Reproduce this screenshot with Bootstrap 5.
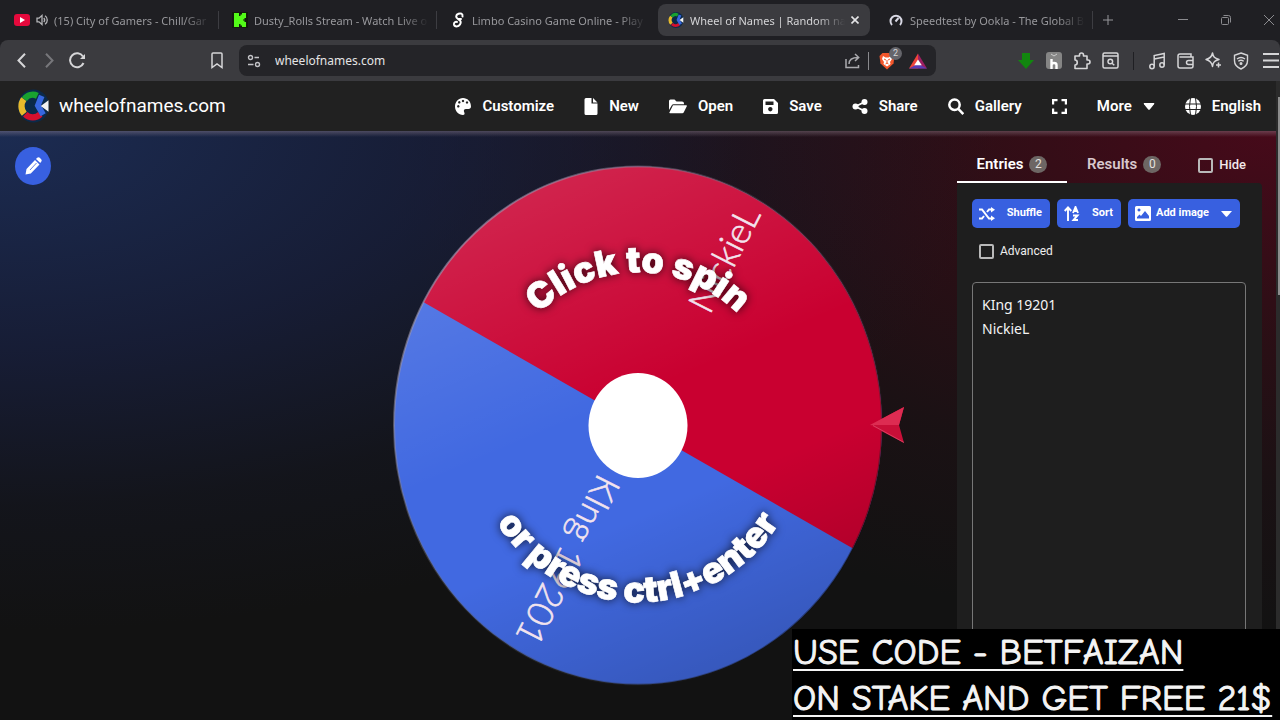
<!DOCTYPE html>
<html lang="en" data-bs-theme="dark">
<head>
<meta charset="utf-8">
<meta name="viewport" content="width=device-width, initial-scale=1">
<title>Wheel of Names | Random name picker</title>
<link rel="stylesheet" href="https://cdn.jsdelivr.net/npm/bootstrap@5.3.0/dist/css/bootstrap.min.css">
<style>
  body { font-family: Roboto, sans-serif; background: #121212; color: #fff; }
  svg { display: block; flex: none; }
  a { color: inherit; text-decoration: none; }
  button.plain { background: none; border: 0; padding: 0; color: inherit; display: flex; align-items: center; justify-content: center; }

  /* tab strip */
  .tabstrip { height: 40px; background: #1f1f23; font: 11px "Noto Sans", sans-serif; color: #98989c; }
  .tab-item { flex: 0 1 218px; min-width: 0; padding: 4px; position: relative; }
  .tab-pill { height: 32px; padding: 0 3px 0 10px; gap: 6px; border-radius: 8px; }
  .tab-item.has-rule::after { content: ""; width: 1px; height: 18px; background: #3d3d42; position: absolute; right: -1px; top: 11px; }
  .tab-item.active { flex-basis: 220px; }
  .tab-item.active .tab-pill { background: #3b3b3f; color: #d4d4d6; padding-right: 11px; }
  .tab-label { flex: 1 1 0; min-width: 0; overflow: hidden; white-space: nowrap;
    -webkit-mask-image: linear-gradient(90deg, #000 calc(100% - 28px), transparent); mask-image: linear-gradient(90deg, #000 calc(100% - 28px), transparent); }
  .new-tab { width: 32px; color: #77777b; }
  .win-btns { gap: 33px; padding-right: 6px; color: #8b8b8f; }

  /* browser toolbar */
  .toolbar-wrap { background: #1f1f23; }
  .toolbar { height: 41px; padding: 0 1px 0 7px; background: #3b3b3f; border-radius: 8px 8px 0 0; color: #d6d6d8; }
  .toolbar .tool { width: 28px; height: 32px; flex: none; }
  .toolbar .tool-end { width: 24px; justify-content: end; }
  .bookmark { margin-left: 112px; margin-right: 8px; }
  .address { height: 31px; background: #242428; border-radius: 8px; margin-right: 76px; padding: 0 9px 0 8px; }
  .address input { background: none; border: 0; outline: 0; color: #e4e4e6; font: 12px "Noto Sans", sans-serif; padding: 0 0 0 14px; }
  .address .rule { margin: 0 10px 0 8px; }
  .address .rewards { margin-left: 14px; }
  .rule { width: 1px; height: 18px; background: #8a8a8e; }
  .rule-dark { margin: 0 9px; background: #1f1f23; }
  .shield-count { position: absolute; top: -5px; right: -7px; width: 13px; height: 13px; border-radius: 50%; background: #65656b; font-size: 9px; line-height: 13px; text-align: center; }

  /* site header */
  .site { background: #212121; min-height: 0; }
  .site-head { height: 50px; padding: 0 15px 0 18px; }
  .brand { font-size: 19px; gap: 10px; }
  .site-menu { gap: 30px; font-size: 15px; font-weight: 600; }
  .site-menu a { display: flex; align-items: center; gap: 11px; }

  /* wheel page */
  .stage { display: grid; grid-template-columns: 1fr 540px 1fr; overflow: hidden;
    background:
      linear-gradient(rgba(170,150,165,.36), rgba(170,150,165,0) 6px),
      radial-gradient(ellipse 1000px 500px at 0 0, rgba(30,50,98,.8), rgba(27,38,84,.52) 45%, rgba(24,30,60,.22) 75%, transparent),
      radial-gradient(ellipse 900px 500px at 100% 0, rgba(84,8,28,.8), rgba(78,10,26,.42) 40%, rgba(60,14,28,.2) 70%, transparent),
      #121212; }
  .edit-btn { width: 36px; height: 38px; margin: 16px 0 0 15px; border-radius: 50%; background: #3860e0; border: 0; color: #fff; padding: 0; display: flex; align-items: center; justify-content: center; }
  .side { width: 305px; margin-right: 14px; justify-self: end; }
  .side-tabs { height: 36px; font-size: 15px; font-weight: 600; }
  .side-tabs .nav-link { padding: 0; height: 36px; background: none; border: 0; border-bottom: 2px solid transparent; border-radius: 0; color: #d9c8cd; display: flex; align-items: center; justify-content: center; gap: 6px; }
  .side-tabs .nav-link.active { width: 110px; color: #fff; border-bottom-color: #fff; }
  .side-tabs .nav-link.results { margin-left: 20px; }
  .count-pill { width: 18px; height: 17px; border-radius: 9px; background: #6d6664; color: #e4e0df; font-size: 12px; line-height: 17px; text-align: center; font-weight: 400; }
  .hide-opt { font-size: 13px; font-weight: 500; gap: 6px; color: #f2e8ea; }
  .box { appearance: none; width: 15px; height: 15px; border: 2px solid #b9b9b9; border-radius: 2px; margin: 0; flex: none; }
  .panel { background: #1e1e1e; border-radius: 4px; padding: 16px 16px 0 15px; }
  .btn-row { gap: 7px; }
  .btn-wheel { height: 29px; padding: 0 8px 0 7px; font-size: 11px; font-weight: 700; background: #3860e0; color: #fff; border: 0; border-radius: 5px; display: flex; align-items: center; justify-content: space-between; }
  .btn-shuffle { width: 78px; }
  .btn-sort { width: 64px; }
  .btn-image { width: 112px; justify-content: start; gap: 5px; }
  .advanced { font-size: 12px; gap: 6px; padding: 15px 0 23px 7px; color: #eee; line-height: 16px; }
  .names { display: block; width: 100%; flex: 1; background: transparent; border: 1px solid #777; border-radius: 4px; color: #f4f4f4; font: 14px/24px "Noto Sans", sans-serif; padding: 10px 9px; resize: none; outline: 0; }
  .scroll { width: 4px; background: #2b2b2b; padding-left: 2px; }
  .scroll-thumb { height: 198px; background: #8d8d8d; }
  .name-text { font: 300 36px Lato, sans-serif; fill: #f3e4ee; stroke: #f3e4ee; stroke-width: .6px; dominant-baseline: central; }
  .hint-text { font: 900 36px Inter, "Liberation Sans", sans-serif; fill: #fff; stroke: #fff; stroke-width: .6px; filter: drop-shadow(0 0 5px rgba(0,0,0,.75)); }

  /* stream banner */
  .banner { position: absolute; right: 0; bottom: 0; width: 488px; height: 91px; padding: 1px 0 0 1px; background: #000; color: #f4f4f4; font: 36px/46px "Comic Sans MS", "Comic Neue", "Noto Sans", sans-serif; -webkit-text-stroke: 1px #f4f4f4; text-decoration: underline; text-decoration-thickness: 2px; text-underline-offset: 5px; white-space: nowrap; }
</style>
</head>
<body class="vh-100 overflow-hidden d-flex flex-column position-relative">

<svg width="0" height="0" class="position-absolute" aria-hidden="true">
  <symbol id="wheel-logo" viewBox="0 0 32 34">
    <ellipse cx="16" cy="17" rx="16" ry="17" fill="#0b2a4a"/>
    <g fill="none" stroke-width="6.500">
      <path d="M6.500 10A11 11.500 0 0 1 20 6.500" stroke="#18a22f"/>
      <path d="M6.500 25A12 12 0 0 1 6 10" stroke="#e8b92b"/>
      <path d="M23 25.500A11 11 0 0 1 7.500 25.500" stroke="#d5102e"/>
      <path d="M24.500 6.500L20.500 16.500 26 26" stroke="#3767e0" stroke-width="6"/>
    </g>
    <path d="M31.500 11v12l-8-6z" fill="#f2f2f2"/>
  </symbol>
</svg>

<nav class="tabstrip d-flex flex-shrink-0" aria-label="Browser tabs">
  <div class="tab-item has-rule"><div class="tab-pill d-flex align-items-center">
    <svg width="16" height="14" viewBox="0 0 16 14"><rect y="1" width="16" height="12" rx="3" fill="#e5093c"/><path d="M6 4l5 3-5 3z" fill="#fff"/></svg>
    <svg width="12" height="12" viewBox="0 0 12 12" fill="none" stroke="#b5b5b8" stroke-width="1.300"><path d="M1 4.200h2L6 1.500v9L3 7.800H1z"/><path d="M7.800 4a3 3 0 0 1 0 4M9 1.800a5 5 0 0 1 0 8.400"/></svg>
    <a href="#" class="tab-label">(15) City of Gamers - Chill/Gar</a></div></div>
  <div class="tab-item has-rule"><div class="tab-pill d-flex align-items-center">
    <svg width="16" height="16" viewBox="0 0 16 16"><rect width="16" height="16" fill="#111d0c"/><path d="M2 1h5v3h1.500V2.500H10V1h4v5h-1.500v1.500H11v1h1.500V10H14v5h-4v-1.500H8.500V12H7v3H2z" fill="#53fc18"/></svg>
    <a href="#" class="tab-label">Dusty_Rolls Stream - Watch Live o</a></div></div>
  <div class="tab-item"><div class="tab-pill d-flex align-items-center">
    <svg width="16" height="16" viewBox="0 0 16 16" fill="none" stroke="#fff" stroke-width="2" stroke-linecap="round"><path d="M12.500 4.500C13 1.500 10.500 1 8.500 1.700 5.500 2.800 5.500 5.500 8 7c3 1.500 3.300 3.500 2 5.500C8.500 15 4.500 15 4 12.500c-.300-2 1.500-3 3-2.500M8 7h3"/></svg>
    <a href="#" class="tab-label">Limbo Casino Game Online - Play</a></div></div>
  <div class="tab-item active"><div class="tab-pill d-flex align-items-center">
    <svg width="16" height="16"><use href="#wheel-logo"/></svg>
    <a href="#" class="tab-label">Wheel of Names | Random na</a>
    <button class="plain" aria-label="Close tab"><svg width="8" height="8" viewBox="0 0 8 8" stroke="#e4e4e6" stroke-width="1.600"><path d="M.5.500l7 7M7.500.500l-7 7"/></svg></button></div></div>
  <div class="tab-item has-rule"><div class="tab-pill d-flex align-items-center">
    <svg width="16" height="16" viewBox="0 0 16 16" fill="none" stroke="#d8d8e4" stroke-width="2"><path d="M4 13a5.500 5.500 0 1 1 8 0M7.500 9.500L10.500 6"/></svg>
    <a href="#" class="tab-label">Speedtest by Ookla - The Global B</a></div></div>
  <button class="plain new-tab" aria-label="New tab"><svg width="12" height="12" viewBox="0 0 12 12" stroke="currentColor"><path d="M6 1v10M1 6h10"/></svg></button>
  <div class="win-btns ms-auto d-flex">
    <button class="plain" aria-label="Minimize"><svg width="10" height="10" viewBox="0 0 10 10" stroke="currentColor"><path d="M0 4.500h10"/></svg></button>
    <button class="plain" aria-label="Restore"><svg width="10" height="10" viewBox="0 0 10 10" stroke="currentColor" fill="none"><rect x=".5" y="2.500" width="7" height="7" rx="1"/><path d="M2.500.500h5q2 0 2 2v5"/></svg></button>
    <button class="plain" aria-label="Close window"><svg width="10" height="10" viewBox="0 0 10 10" stroke="currentColor"><path d="M0 0l10 10M10 0L0 10"/></svg></button>
  </div>
</nav>

<div class="toolbar-wrap flex-shrink-0">
<div class="toolbar d-flex align-items-center">
  <button class="plain tool" aria-label="Back"><svg width="9" height="15" viewBox="0 0 9 15" fill="none" stroke="currentColor" stroke-width="2"><path d="M8 .700L1.500 7.500 8 14.300"/></svg></button>
  <button class="plain tool" aria-label="Forward"><svg width="9" height="15" viewBox="0 0 9 15" fill="none" stroke="#77777b" stroke-width="2"><path d="M1 .700l6.500 6.800L1 14.300"/></svg></button>
  <button class="plain tool" aria-label="Reload"><svg width="17" height="17" viewBox="0 0 17 17" fill="none" stroke="currentColor" stroke-width="2"><path d="M14.500 11A7 7 0 1 1 14 4.500"/><path d="M16 2v5h-5z" fill="currentColor" stroke="none"/></svg></button>
  <button class="plain tool bookmark" aria-label="Bookmark"><svg width="12" height="17" viewBox="0 0 12 17" fill="none" stroke="currentColor" stroke-width="1.500"><path d="M1 2q0-1 1-1h8q1 0 1 1v13.500L6 12l-5 3.500z"/></svg></button>
  <div class="address d-flex align-items-center flex-grow-1">
    <svg width="14" height="14" viewBox="0 0 14 14" fill="none" stroke="#c4c4c8" stroke-width="1.400"><circle cx="3.500" cy="3.500" r="2"/><path d="M7.500 3.500H12M1 10.500h5.500"/><circle cx="10.500" cy="10.500" r="2"/></svg>
    <input type="text" class="flex-grow-1" aria-label="Address" value="wheelofnames.com">
    <svg width="15" height="16" viewBox="0 0 15 16" fill="none" stroke="#aaaaae" stroke-width="1.500"><path d="M1 6v8.500h12.500V12M4 11c0-4 3-6.500 9-6.500M10 1l3.700 3.500L10 8"/></svg>
    <span class="rule"></span>
    <button class="plain position-relative" aria-label="Shields"><svg width="16" height="18" viewBox="0 0 16 18"><path d="M3.500 1h9L15.500 4l-1 7.500L8 17.500 1.500 11.500.500 4z" fill="#f1562b"/><path d="M4 4l2.500 1.500h3L12 4l1 3-2 3 .5 2L8 14.500 4.500 12l.5-2-2-3z" fill="#fff"/><path d="M5 7l2 1M11 7L9 8M8 8v3M6.500 12L8 11l1.500 1" stroke="#f1562b" fill="none"/></svg><span class="shield-count">2</span></button>
    <button class="plain rewards" aria-label="Rewards"><svg width="18" height="16" viewBox="0 0 19 16"><path d="M9.500 0L0 16h9.500z" fill="#f0443a"/><path d="M9.500 0L19 16H9.500z" fill="#9e1f63"/><path d="M0 16l9.500-5 9.500 5z" fill="#5b3cb5"/><path d="M9.500 6.500l4 6h-8z" fill="#fff"/></svg></button>
  </div>
  <button class="plain tool" aria-label="Downloader"><svg width="16" height="16" viewBox="0 0 16 16"><path d="M4 0h8v7h4l-8 9-8-9h4z" fill="#12860f"/></svg></button>
  <button class="plain tool" aria-label="Extension"><svg width="16" height="17" viewBox="0 0 16 17"><rect width="16" height="17" rx="3" fill="#858585"/><path d="M5.500 7v10M5.500 13q0-2 2.500-2t2.500 2v4" stroke="#fff" stroke-width="2.400" fill="none"/><path d="M5 2l3 2 3-2" stroke="#ccc" fill="none"/></svg></button>
  <button class="plain tool" aria-label="Extensions"><svg width="18" height="18" viewBox="0 0 18 18" fill="none" stroke="currentColor" stroke-width="1.600" stroke-linejoin="round"><path d="M2 4h4.500V3a2 2 0 0 1 4 0v1H14v4h1a2 2 0 0 1 0 4h-1v4.500H2V13c3 0 3-5 0-5z"/></svg></button>
  <button class="plain tool" aria-label="Search tabs"><svg width="17" height="17" viewBox="0 0 17 17" fill="none" stroke="currentColor" stroke-width="1.500"><rect x="1" y="1" width="15" height="15" rx="1.500"/><path d="M1 4h15"/><circle cx="8.300" cy="9.500" r="2.300"/><path d="M10 11.200l2.300 2"/></svg></button>
  <span class="rule rule-dark"></span>
  <button class="plain tool" aria-label="Playlist"><svg width="17" height="18" viewBox="0 0 17 18" fill="none" stroke="currentColor" stroke-width="1.500"><circle cx="3" cy="14.500" r="2.200"/><circle cx="13" cy="13" r="2.200"/><path d="M5.200 14.500V3.500l10-2V13M5.200 7l10-2"/></svg></button>
  <button class="plain tool" aria-label="Wallet"><svg width="17" height="16" viewBox="0 0 17 16" fill="none" stroke="currentColor" stroke-width="1.500"><path d="M14 4V1H3Q1 1 1 3v10q0 2 2 2h11q2 0 2-2V4H2.500M16 7.500h-4.500a2 2 0 0 0 0 4H16"/></svg></button>
  <button class="plain tool" aria-label="Leo AI"><svg width="17" height="17" viewBox="0 0 17 17" fill="none" stroke="currentColor" stroke-width="1.500" stroke-linejoin="round"><path d="M7.500 1c.700 4 2 5.300 6.500 6.500-2 .500-3.500 1-4.700 2.300C8 11 7.800 12.500 7.500 14.500 6.800 10 5 8.500 1 7.500 5 6.500 6.800 5 7.500 1zM13.500 10.500v5M11 13h5"/></svg></button>
  <button class="plain tool" aria-label="VPN"><svg width="16" height="18" viewBox="0 0 16 18" fill="none" stroke="currentColor" stroke-width="1.400"><path d="M8 1l6.500 2.300v5.500c0 4-3 6.700-6.500 8.200C4.500 15.500 1.500 12.800 1.500 8.800V3.300z"/><path d="M4 7q4-3 8 0M5.300 9.300q2.700-2 5.400 0"/><circle cx="8" cy="11.500" r=".8"/></svg></button>
  <button class="plain tool tool-end" aria-label="Menu"><svg width="16" height="15" viewBox="0 0 16 15" stroke="currentColor" stroke-width="2"><path d="M0 1h16M0 7.500h16M0 14h16"/></svg></button>
</div>
</div>

<div class="site d-flex flex-grow-1">
<div class="d-flex flex-column flex-grow-1">
<header class="site-head d-flex align-items-center flex-shrink-0">
  <a href="#" class="brand d-flex align-items-center"><svg width="31" height="34"><use href="#wheel-logo"/></svg>wheelofnames.com</a>
  <nav class="site-menu d-flex align-items-center ms-auto">
    <a href="#"><svg width="16" height="17" viewBox="0 0 16 17" fill="currentColor"><path fill-rule="evenodd" d="M8 0C3.500 0 0 3.800 0 8.500 0 13 3.500 17 8 17c1.500 0 2-1.500 1.300-2.600C8.300 12.500 9 11 11 11h2.500C15 11 16 10 16 8.500 16 3.500 12.500 0 8 0zM3.300 9.500a1.200 1.200 0 1 1 .01 0zm1-4a1.200 1.200 0 1 1 .01 0zM8 4.200a1.200 1.200 0 1 1 .01 0zm4 1.500a1.200 1.200 0 1 1 .01 0z"/></svg>Customize</a>
    <a href="#"><svg width="14" height="17" viewBox="0 0 13 17" fill="currentColor"><path d="M1.500 0H7v5.500h6v10q0 1.500-1.500 1.500h-10Q0 17 0 15.500v-14Q0 0 1.500 0zM8.500 0L13 4.500H8.500z"/></svg>New</a>
    <a href="#"><svg width="18" height="15" viewBox="0 0 18 15" fill="currentColor"><path d="M0 11V2Q0 .500 1.500.500h4L7.500 2.500h5.500Q15 2.500 15 4.500V5.300H4.500Q3.300 5.300 2.800 6.300zM4.200 6.300H17.300q1 0 .5 1l-3 6q-.4 1-1.500 1H1Q0 14.300.500 13.300l3-6q.2-1 .7-1z"/></svg>Open</a>
    <a href="#"><svg width="15" height="15" viewBox="0 0 15 15" fill="currentColor"><path fill-rule="evenodd" d="M1.500 0H11l4 4v9.500q0 1.500-1.500 1.500h-12Q0 15 0 13.500v-12Q0 0 1.500 0zM2.500 2.500v3.500h8V2.500zM7.300 8a2.200 2.200 0 1 0 .01 0z"/></svg>Save</a>
    <a href="#"><svg width="16" height="15" viewBox="0 0 15 15" fill="currentColor"><circle cx="3" cy="7.500" r="3"/><circle cx="12" cy="3" r="3"/><circle cx="12" cy="12" r="3"/><path d="M12 3L3 7.500l9 4.500" fill="none" stroke="currentColor" stroke-width="1.800"/></svg>Share</a>
    <a href="#"><svg width="16" height="17" viewBox="0 0 16 17" fill="none" stroke="currentColor" stroke-width="2.500"><circle cx="6.500" cy="6.800" r="5.200"/><path d="M10.300 10.800l5 5.300"/></svg>Gallery</a>
    <a href="#" aria-label="Fullscreen"><svg width="15" height="15" viewBox="0 0 15 15" fill="none" stroke="currentColor" stroke-width="2.200"><path d="M1.100 5.500V1.100h4.400M9.500 1.100h4.400v4.400M13.900 9.500v4.400H9.500M5.500 13.900H1.100V9.500"/></svg></a>
    <a href="#">More<svg width="12" height="7" viewBox="0 0 11 7" fill="currentColor"><path d="M.5 0h10q.6.500 0 1.300L6.300 6.500q-.8.700-1.600 0L.5 1.300Q0 .500.500 0z"/></svg></a>
    <a href="#"><svg width="16" height="17" viewBox="0 0 16 17"><ellipse cx="8" cy="8.500" rx="8" ry="8.500" fill="currentColor"/><path d="M0 6h16M0 11.500h16M5.500 0Q3.500 8.500 5.500 17M10.500 0q2 8.500 0 17" fill="none" stroke="#212121"/></svg>English</a>
  </nav>
</header>

<main class="stage flex-grow-1">
  <div><button class="edit-btn" aria-label="Edit title"><svg width="17" height="18" viewBox="0 0 17 18" fill="currentColor"><path d="M.5 17.500l1-5.500L10 3l4.500 4.500-8.700 9zM11 2l1.200-1.200q1.300-1.300 2.600 0l1.300 1.500q1.200 1.200 0 2.500L15.300 6z"/><path d="M5 13l6.500-7" stroke="#3860e0" stroke-width=".8"/></svg></button></div>

  <svg width="540" height="589" viewBox="368 131 540 589" role="img" aria-label="Wheel with two names">
    <defs>
      <linearGradient id="shade" x1=".3" y1="0" x2=".7" y2="1">
        <stop offset="0" stop-color="#fff" stop-opacity=".15"/><stop offset=".45" stop-color="#fff" stop-opacity="0"/>
        <stop offset=".65" stop-color="#000" stop-opacity="0"/><stop offset="1" stop-color="#000" stop-opacity=".18"/>
      </linearGradient>
      <linearGradient id="rim" x1="0" y1="0" x2="1" y2=".8">
        <stop offset="0" stop-color="#c5b8d4" stop-opacity=".7"/><stop offset=".5" stop-color="#666" stop-opacity=".3"/><stop offset="1" stop-color="#000" stop-opacity=".4"/>
      </linearGradient>
      <clipPath id="disc"><ellipse cx="638" cy="425.500" rx="244" ry="259"/></clipPath>
      <path id="arc-top" d="M492 425.500A146 153 0 0 1 784 425.500"/>
      <path id="arc-bottom" d="M469 425.500A169 177 0 0 0 807 425.500"/>
    </defs>
    <ellipse cx="638" cy="425.500" rx="244" ry="259" fill="#4169e1"/>
    <path d="M380 277.300V140H900V575.500z" fill="#c90030" clip-path="url(#disc)"/>
    <ellipse cx="638" cy="425.500" rx="244" ry="259" fill="url(#shade)" stroke="url(#rim)" stroke-width="2"/>
    <text class="name-text" text-anchor="end" transform="translate(638 425.500) rotate(-63)" x="244" y="0">NickieL</text>
    <text class="name-text" text-anchor="end" transform="translate(638 425.500) rotate(117)" x="244" y="0">KIng 19201</text>
    <ellipse cx="638" cy="425.500" rx="49.500" ry="52.500" fill="#fff"/>
    <text class="hint-text" text-anchor="middle"><textPath href="#arc-top" startOffset="50%">Click to spin</textPath></text>
    <text class="hint-text" text-anchor="middle"><textPath href="#arc-bottom" startOffset="50%">or press ctrl+enter</textPath></text>
    <path d="M870 425l34-18-5 18 5 18z" fill="#c90f38"/><path d="M870 425l34-18-5 18z" fill="#dd2c52"/><path d="M873 425.500l31 17" fill="none" stroke="#f0698a" stroke-opacity=".5"/>
  </svg>

  <aside class="side d-flex flex-column">
    <div class="side-tabs nav d-flex align-items-center mt-3">
      <button class="nav-link active">Entries <span class="count-pill">2</span></button>
      <button class="nav-link results">Results <span class="count-pill">0</span></button>
      <label class="hide-opt d-flex align-items-center ms-auto me-3"><input type="checkbox" class="box">Hide</label>
    </div>
    <div class="panel d-flex flex-column flex-grow-1">
      <div class="btn-row d-flex">
        <button class="btn-wheel btn-shuffle"><svg width="16" height="14" viewBox="0 0 16 14" fill="none" stroke="currentColor" stroke-width="2"><path d="M0 2.500h3l7 9h3M0 11.500h3L5 9M8 5l2-2.500h3"/><path d="M12 0l4 2.700L12 5.500zM12 8.500l4 2.800-4 2.700z" fill="currentColor" stroke="none"/></svg>Shuffle</button>
        <button class="btn-wheel btn-sort"><svg width="16" height="15" viewBox="0 0 16 15" fill="none" stroke="currentColor" stroke-width="1.900"><path d="M4 15V2M.7 5L4 1.500 7.300 5M9 7l2.500-6L14 7M10 5h3M9 9.500h4.500L9.500 14H14"/></svg>Sort</button>
        <button class="btn-wheel btn-image"><svg width="16" height="15" viewBox="0 0 16 15"><path fill="currentColor" fill-rule="evenodd" d="M1.500 0h13Q16 0 16 1.500v12q0 1.500-1.500 1.500h-13Q0 15 0 13.500v-12Q0 0 1.500 0zM4 2.500A1.500 1.500 0 1 0 4.010 2.500zM2 12.500h12V10l-4-5-4 5-1.500-1.500L2 11z"/></svg>Add image<svg class="ms-auto" width="11" height="6" viewBox="0 0 11 6" fill="currentColor"><path d="M0 0h11L6.200 5.500q-.7.600-1.400 0z"/></svg></button>
      </div>
      <label class="advanced d-flex align-items-center"><input type="checkbox" class="box">Advanced</label>
      <textarea class="names" aria-label="Entries" spellcheck="false">KIng 19201
NickieL</textarea>
    </div>
  </aside>
</main>
</div>
<div class="scroll pt-3"><div class="scroll-thumb"></div></div>
</div>

<div class="banner">USE CODE - BETFAIZAN<br>ON STAKE AND GET FREE 21$</div>

<script src="https://cdn.jsdelivr.net/npm/bootstrap@5.3.0/dist/js/bootstrap.bundle.min.js"></script>
</body>
</html>
